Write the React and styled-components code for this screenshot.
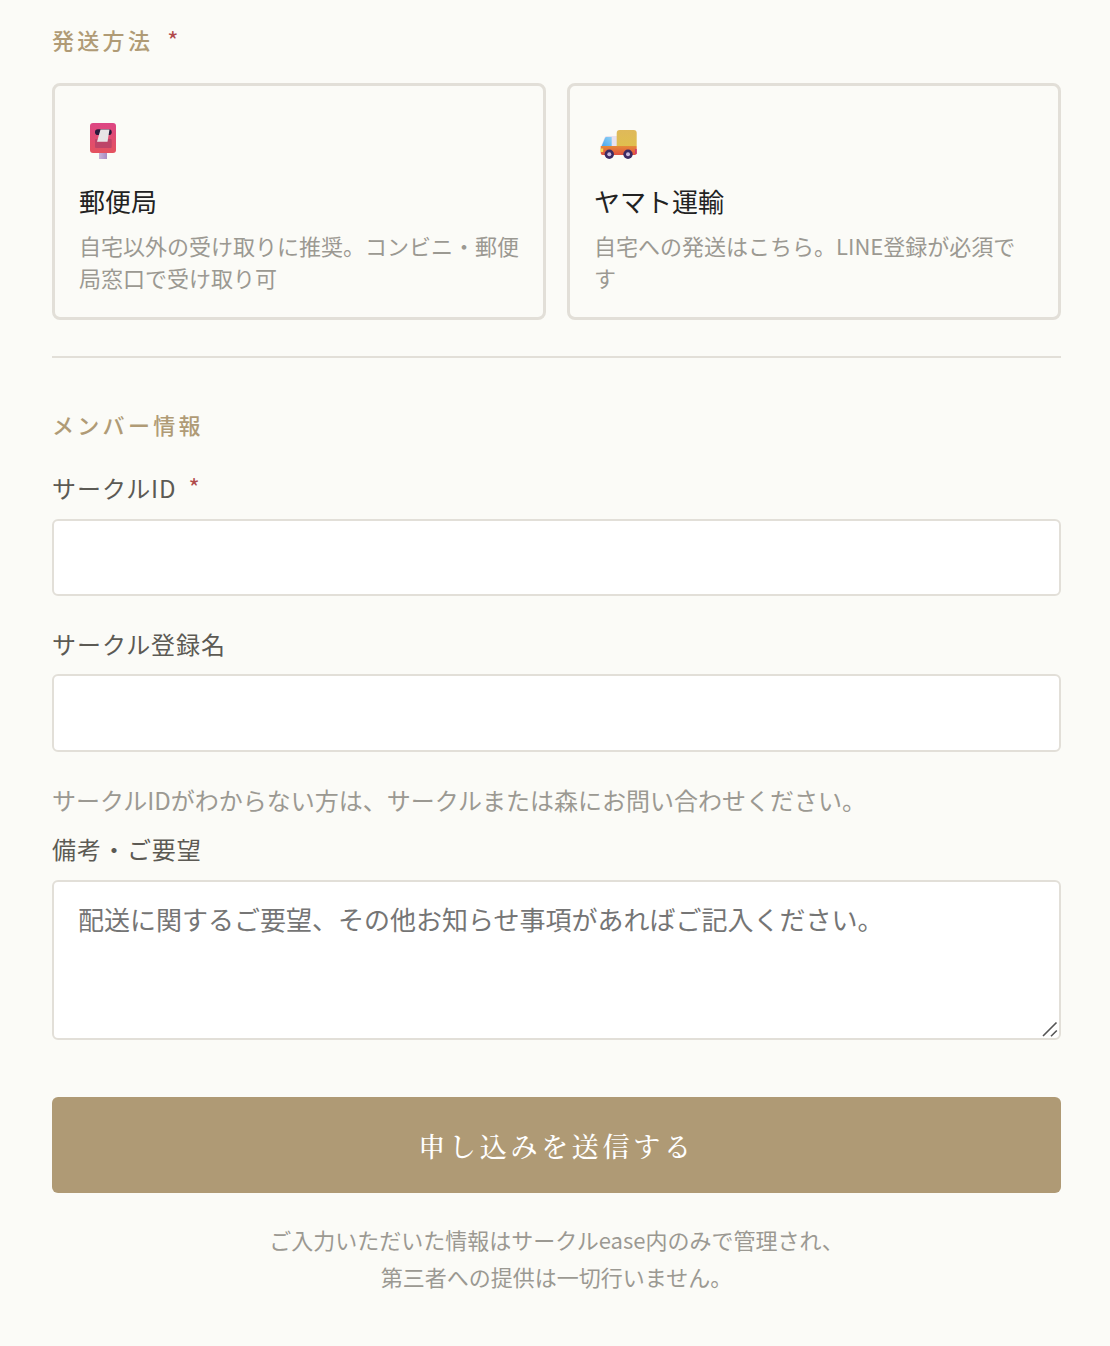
import styled, { createGlobalStyle } from "styled-components";

const GlobalStyle = createGlobalStyle`
html, body {
  margin: 0;
  padding: 0;
  background: #fbfbf7;
}
* { box-sizing: border-box; }
`;

const Page = styled.form`
  width: 1110px;
  height: 1346px;
  padding: 23px 49px 0 52px;
  background: #fbfbf7;
  font-family: "Noto Sans CJK JP", "Noto Sans", sans-serif;
  overflow: hidden;
`;

const SectionTitle = styled.div`
  font-size: 22px;
  line-height: 33px;
  font-weight: 500;
  letter-spacing: 3.3px;
  color: #b09b76;
  margin-bottom: ${(p) => p.$mb || 27}px;
`;

const Required = styled.span`
  color: #b04a4a;
  font-size: 24px;
  line-height: 1;
  font-weight: 400;
  letter-spacing: 0;
  margin-left: ${(p) => p.$ml || 12}px;
  position: relative;
  top: ${(p) => p.$top || -1}px;
`;

const Cards = styled.div`
  display: grid;
  grid-template-columns: 494px 494px;
  gap: 21px;
`;

const Card = styled.div`
  height: 237px;
  padding: 36px 24px 0;
  border: 3px solid #e2dfd8;
  border-radius: 8px;
`;

const IconSlot = styled.div`
  height: 40px;
  margin-bottom: 20px;
  svg { display: block; overflow: visible; }
`;

const CardName = styled.div`
  font-size: 26px;
  line-height: 38px;
  font-weight: 400;
  color: #222;
  margin-bottom: 9px;
`;

const CardText = styled.div`
  font-size: 22px;
  line-height: 32px;
  color: #9b9992;
`;

const Divider = styled.hr`
  margin: 36px 0 50px;
  border: 0;
  border-top: 2px solid #e2dfd8;
`;

const Label = styled.label`
  display: block;
  font-size: 24px;
  line-height: 36px;
  letter-spacing: 0.96px;
  color: #5c5a54;
  margin-bottom: ${(p) => p.$mb || 13}px;
`;

const Input = styled.input`
  display: block;
  width: 100%;
  height: ${(p) => p.$h || 77}px;
  margin-bottom: 30px;
  background: #fff;
  border: 2px solid #e2dfd8;
  border-radius: 6px;
  outline: none;
`;

const Hint = styled.div`
  font-size: 24px;
  line-height: 36px;
  color: #9b9992;
  margin-bottom: 13px;
`;

const TextareaWrap = styled.div`
  position: relative;
  height: 160px;
`;

const Textarea = styled.textarea`
  display: block;
  width: 100%;
  height: 100%;
  padding: 18px 24px;
  background: #fff;
  border: 2px solid #e2dfd8;
  border-radius: 6px;
  outline: none;
  resize: none;
  font-family: inherit;
  font-size: 26px;
  line-height: 37px;
  &::placeholder {
    color: #757575;
    opacity: 1;
  }
`;

const ResizeGrip = styled.svg`
  position: absolute;
  right: 3px;
  bottom: 3px;
  width: 16px;
  height: 16px;
  pointer-events: none;
`;

const Submit = styled.button`
  display: block;
  width: 100%;
  height: 96px;
  margin-top: 57px;
  background: #af9a75;
  color: #fff;
  border: 0;
  border-radius: 6px;
  font-family: "Noto Serif CJK JP", "Liberation Serif", serif;
  font-size: 27px;
  font-weight: 500;
  letter-spacing: 3.7px;
`;

const Note = styled.p`
  margin: 28px 0 0;
  font-size: 22px;
  line-height: 37px;
  text-align: center;
  color: #9b9992;
`;

const PostboxIcon = () => (
  <svg width="40" height="40" viewBox="0 0 40 40">
    <defs>
      <linearGradient id="boxFill" x1="0" y1="0" x2="0" y2="1">
        <stop offset="0" stopColor="#dd4684" />
        <stop offset="1" stopColor="#e4525f" />
      </linearGradient>
      <linearGradient id="postFill" x1="0" y1="0" x2="1" y2="0">
        <stop offset="0" stopColor="#c9b3da" />
        <stop offset="1" stopColor="#a88cc4" />
      </linearGradient>
    </defs>
    <rect x="20" y="31" width="8" height="6" fill="url(#postFill)" />
    <rect x="11" y="1" width="26" height="30" rx="3" fill="url(#boxFill)" />
    <rect x="16" y="7.3" width="16.7" height="5.7" rx="2.8" fill="#2a1a3c" />
    <rect x="16" y="17" width="16.7" height="9" rx="1" fill="#bd4468" />
    <path d="M21.500 7.500h9l-2 12.200H18z" fill="#e8e4e6" />
  </svg>
);

const TruckIcon = () => (
  <svg width="44" height="40" viewBox="0 0 44 40">
    <defs>
      <linearGradient id="cargoFill" x1="0" y1="0" x2="0" y2="1">
        <stop offset="0" stopColor="#dfb95a" />
        <stop offset="1" stopColor="#e0bf4e" />
      </linearGradient>
      <linearGradient id="bedFill" x1="0" y1="0" x2="0" y2="1">
        <stop offset="0" stopColor="#e58a38" />
        <stop offset="1" stopColor="#e2503f" />
      </linearGradient>
      <linearGradient id="glassFill" x1="0" y1="1" x2="1" y2="0">
        <stop offset="0" stopColor="#4aa8ee" />
        <stop offset="1" stopColor="#8fd0f5" />
      </linearGradient>
    </defs>
    <path d="M7 24l3.5-8.3a2.500 2.500 0 0 1 2.300-1.700H23v10z" fill="#e9e2ee" />
    <path d="M7.700 24l3.300-8a1.500 1.500 0 0 1 1.400-1h5.300v9z" fill="url(#glassFill)" />
    <path d="M22.700 11a3 3 0 0 1 3-3h14a3 3 0 0 1 3 3v13h-20z" fill="url(#cargoFill)" />
    <path d="M6.700 24h36v7a2 2 0 0 1-2 2H8.700a2 2 0 0 1-2-2z" fill="url(#bedFill)" />
    <rect x="6.700" y="26.500" width="2.500" height="3.500" fill="#f5dc55" />
    <rect x="41" y="27" width="1.700" height="5" fill="#d23a70" />
    <circle cx="15.300" cy="32.300" r="4.700" fill="#3b2a63" />
    <circle cx="15.300" cy="32.300" r="2" fill="#c8b8dc" />
    <circle cx="34" cy="32.300" r="4.700" fill="#3b2a63" />
    <circle cx="34" cy="32.300" r="2" fill="#c8b8dc" />
  </svg>
);

const App = () => {
  return (
    <Page onSubmit={(e) => e.preventDefault()}>
      <GlobalStyle />
      <SectionTitle>
        発送方法<Required $ml={14} $top={1}>*</Required>
      </SectionTitle>
      <Cards>
        <Card>
          <IconSlot>
            <PostboxIcon />
          </IconSlot>
          <CardName>郵便局</CardName>
          <CardText>自宅以外の受け取りに推奨。コンビニ・郵便局窓口で受け取り可</CardText>
        </Card>
        <Card>
          <IconSlot>
            <TruckIcon />
          </IconSlot>
          <CardName>ヤマト運輸</CardName>
          <CardText>自宅への発送はこちら。LINE登録が必須です</CardText>
        </Card>
      </Cards>
      <Divider />
      <SectionTitle $mb={29}>メンバー情報</SectionTitle>
      <Label>
        サークルID<Required>*</Required>
      </Label>
      <Input />
      <Label $mb={12}>サークル登録名</Label>
      <Input $h={78} />
      <Hint>サークルIDがわからない方は、サークルまたは森にお問い合わせください。</Hint>
      <Label>備考・ご要望</Label>
      <TextareaWrap>
        <Textarea placeholder="配送に関するご要望、その他お知らせ事項があればご記入ください。" />
        <ResizeGrip viewBox="0 0 16 16">
          <path d="M1 15L14.500 1.500M9 15.300L14.800 9.500" stroke="#555" strokeWidth="1.600" fill="none" />
        </ResizeGrip>
      </TextareaWrap>
      <Submit type="submit">申し込みを送信する</Submit>
      <Note>
        ご入力いただいた情報はサークルease内のみで管理され、
        <br />
        第三者への提供は一切行いません。
      </Note>
    </Page>
  );
};

export default App;
